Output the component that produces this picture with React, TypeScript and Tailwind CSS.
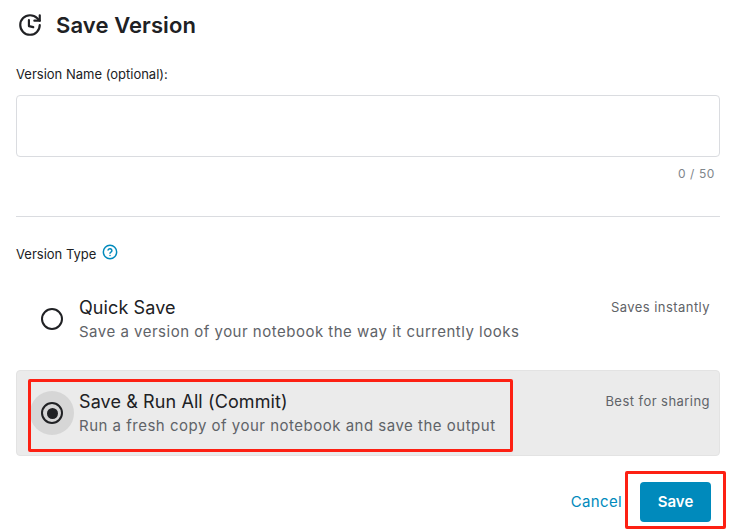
const font = { fontFamily: 'Inter, "Liberation Sans", sans-serif' };

function VersionIcon() {
  return (
    <svg width="26" height="26" viewBox="0 0 24 24" fill="none" stroke="#202124" strokeWidth="2" strokeLinecap="round" strokeLinejoin="round">
      <path d="M21 12a9 9 0 1 1-9-9 9.75 9.75 0 0 1 6.74 2.74L21 8" />
      <path d="M21 3v5h-5" />
      <path d="M11 7.5v5.5l4 1" />
    </svg>
  );
}

function HelpIcon() {
  return (
    <svg className="-translate-y-[2px]" width="16" height="16" viewBox="0 0 24 24" fill="none" stroke="#008abc" strokeWidth="2.2" strokeLinecap="round" strokeLinejoin="round">
      <circle cx="12" cy="12" r="10" />
      <path d="M9.1 9a3 3 0 0 1 5.8 1c0 2-2.9 2.4-2.9 4" />
      <path d="M12 17.4h.01" />
    </svg>
  );
}

interface OptionProps {
  title: string;
  description: string;
  hint: string;
  selected?: boolean;
}

function Option({ title, description, hint, selected }: OptionProps) {
  return (
    <div
      className={`flex h-[86px] items-center rounded-[4px] pl-[13px] pr-[9px] border ${
        selected ? 'bg-[#ebebeb] border-[#e3e3e3]' : 'bg-white border-transparent'
      }`}
    >
      <div className={`flex h-11 w-11 shrink-0 items-center justify-center rounded-full ${selected ? 'bg-[#d6d6d6]' : ''}`}>
        <div className="flex h-[22px] w-[22px] items-center justify-center rounded-full border-2 border-[#202124]">
          {selected && <div className="h-[11px] w-[11px] rounded-full bg-[#202124]" />}
        </div>
      </div>
      <div className="ml-[5px] flex-1 self-center">
        <div className="text-[18px] leading-[22px] tracking-[0.1px] text-[#202124]">{title}</div>
        <div className="mt-[3px] text-[15px] leading-[20px] tracking-[0.5px] text-[#5f6368]">{description}</div>
      </div>
      <div className="mb-[24px] text-[13px] leading-4 tracking-[0.45px] text-[#5f6368]">{hint}</div>
    </div>
  );
}

export default function App() {
  return (
    <div className="relative h-[530px] w-[742px] overflow-hidden bg-white" style={font}>
      <div className="px-4 pr-[22px]">
        <div className="flex h-[50px] items-center gap-[13px] pl-[1px]">
          <VersionIcon />
          <h1 className="text-[22px] font-semibold tracking-[0.1px] text-[#202124]">Save Version</h1>
        </div>
        <div className="mt-[16px] text-[13px] leading-4 text-[#202124]">Version Name (optional):</div>
        <input className="mt-[13px] block h-[62px] w-full rounded-[4px] border border-[#dadce0] bg-white" />
        <div className="mt-[9px] pr-[5px] text-right text-[12px] leading-4 tracking-[0.6px] text-[#80868b]">0 / 50</div>
        <div className="mt-[34px] border-t border-[#dadce0]" />
        <div className="mt-[29px] flex items-center gap-[6px] text-[13px] leading-4 text-[#202124]">
          Version Type
          <HelpIcon />
        </div>
        <div className="mt-[14px]">
          <Option
            title="Quick Save"
            description="Save a version of your notebook the way it currently looks"
            hint="Saves instantly"
          />
          <div className="mt-[8px]">
            <Option
              selected
              title="Save & Run All (Commit)"
              description="Run a fresh copy of your notebook and save the output"
              hint="Best for sharing"
            />
          </div>
        </div>
        <div className="mt-[26px] flex items-center justify-end gap-[18px] pr-[9px]">
          <button className="text-[15px] tracking-[0.35px] text-[#008abc]">Cancel</button>
          <button className="h-10 w-[71px] rounded-[4px] bg-[#008abc] text-[15px] font-semibold text-white">Save</button>
        </div>
      </div>
      <div className="absolute left-[28px] top-[379px] h-[73px] w-[485px] rounded-[2px] border-[3px] border-[#fd2013]" />
      <div className="absolute left-[625px] top-[471px] h-[58px] w-[101px] rounded-[2px] border-[3px] border-[#fd2013]" />
    </div>
  );
}
